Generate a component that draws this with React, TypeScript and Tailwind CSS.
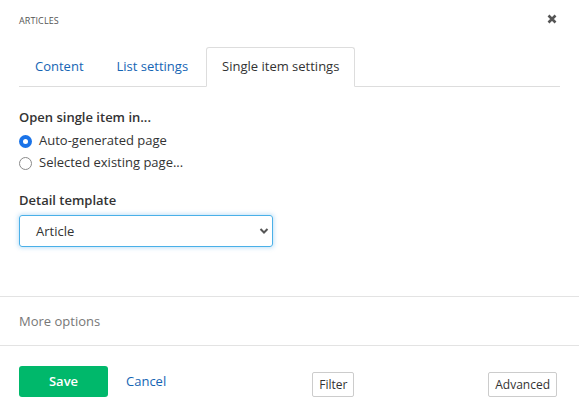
import React from "react";

export default function App() {
  return (
    <div
      className="w-[579px] h-[410px] bg-white text-[#333] overflow-hidden"
      style={{ fontFamily: '"Open Sans", "Noto Sans", sans-serif' }}
    >
      {/* header */}
      <div className="flex items-center justify-between pl-[19px] pr-[22px] pt-[11px] h-[30px]">
        <span className="text-[9px] text-[#555] uppercase tracking-[0.1px]">Articles</span>
        <svg width="10" height="10" viewBox="0 0 10 10" className="mt-[-4px]">
          <path d="M1.5 1.5 L8.5 8.5 M8.5 1.5 L1.5 8.5" stroke="#555" strokeWidth="2.6" strokeLinecap="butt" />
        </svg>
      </div>

      {/* tabs */}
      <div className="mx-[19px] mt-[17px] flex items-end border-b border-[#ddd] h-[40px]">
        <div className="px-[16px] h-[39px] flex items-center text-[13px] text-[#1565b4]">Content</div>
        <div className="px-[17px] h-[39px] flex items-center text-[13px] text-[#1565b4]">List settings</div>
        <div className="ml-[1px] px-[15px] h-[40px] mb-[-1px] flex items-center text-[13px] text-[#333] border border-[#ddd] border-b-white bg-white rounded-t-[3px]">
          Single item settings
        </div>
      </div>

      {/* body */}
      <div className="px-[19px] pt-[21px]">
        <div className="text-[13px] font-semibold text-[#333] leading-[18px]">Open single item in...</div>
        <div className="mt-[4px] flex items-center h-[22px]">
          <span className="w-[13px] h-[13px] rounded-full bg-[#1a73e8] flex items-center justify-center">
            <span className="w-[5px] h-[5px] rounded-full bg-white" />
          </span>
          <span className="ml-[7px] text-[13px] text-[#333]">Auto-generated page</span>
        </div>
        <div className="flex items-center h-[22px]">
          <span className="w-[13px] h-[13px] rounded-full border border-[#8a8a8a] bg-white" />
          <span className="ml-[7px] text-[13px] text-[#333]">Selected existing page...</span>
        </div>
        <div className="mt-[17px] text-[13px] font-semibold text-[#333] leading-[18px]">Detail template</div>
        <div className="mt-[6px] w-[254px] h-[32px] rounded-[3px] border border-[#4ab0e8] shadow-[0_0_4px_1px_rgba(80,170,230,0.35)] flex items-center justify-between pl-[16px] pr-[3px]">
          <span className="text-[13px] text-[#333] mt-[2px]">Article</span>
          <svg width="10" height="8" viewBox="0 0 10 8">
            <path d="M1.5 2 L5 5.5 L8.5 2" stroke="#555" strokeWidth="2" fill="none" />
          </svg>
        </div>
      </div>

      {/* more options */}
      <div className="mt-[49px] border-t border-b border-[#e3e3e3] h-[50px] flex items-center px-[19px]">
        <span className="text-[13px] text-[#777] mt-[2px]">More options</span>
      </div>

      {/* footer */}
      <div className="flex items-end pl-[19px] pr-[22px] pt-[20px]">
        <div className="flex items-center">
          <button className="w-[89px] h-[31px] rounded-[3px] bg-[#00b86b] text-white text-[13px] font-semibold">
            Save
          </button>
          <span className="ml-[18px] text-[13px] text-[#1565b4]">Cancel</span>
        </div>
        <button className="ml-[146px] h-[25px] px-[6px] border border-[#ccc] rounded-[2px] bg-white text-[12px] text-[#333]">
          Filter
        </button>
        <button className="ml-auto h-[25px] px-[6px] border border-[#ccc] rounded-[2px] bg-white text-[12px] text-[#333]">
          Advanced
        </button>
      </div>
    </div>
  );
}
